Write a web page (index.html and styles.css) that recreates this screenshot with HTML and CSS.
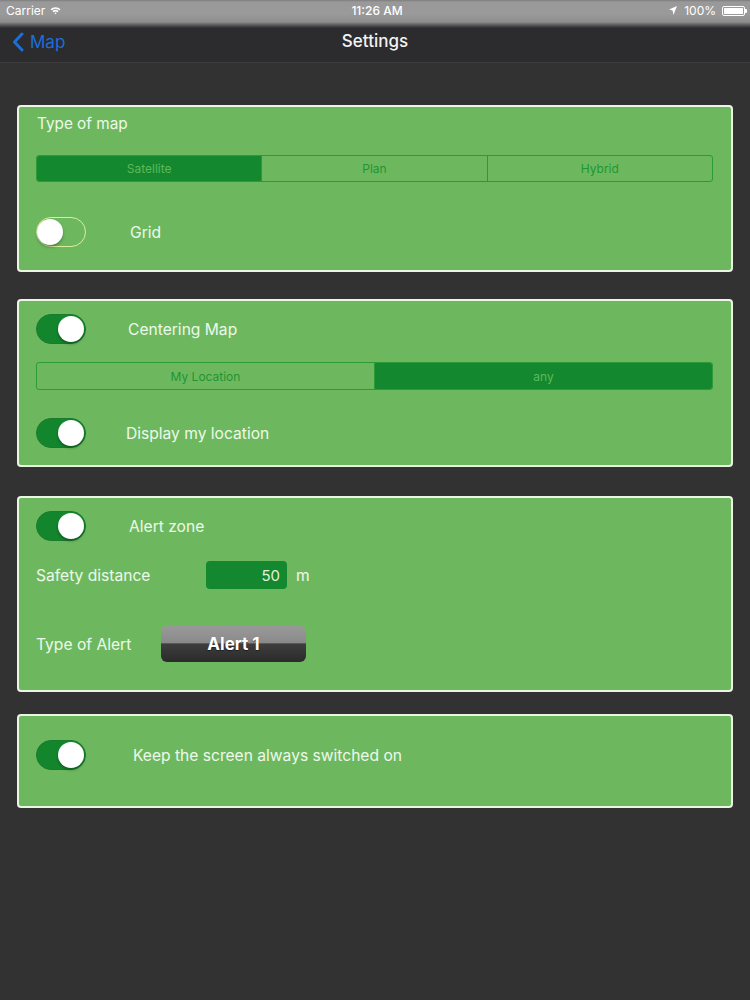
FILE: index.html
```html
<!DOCTYPE html>
<html lang="en">
<head>
<meta charset="utf-8">
<title>Settings</title>
<link rel="stylesheet" href="styles.css">
</head>
<body>
<div class="status">
  <div class="status-left">
    <span>Carrier</span>
    <svg class="wifi" width="11" height="9" viewBox="0 0 11 9"><path d="M0.5 3.2 A7.5 7.5 0 0 1 10.5 3.2 L9.4 4.3 A6 6 0 0 0 1.6 4.3 Z" fill="#fff"/><path d="M2.4 5.1 A4.8 4.8 0 0 1 8.6 5.1 L7.5 6.2 A3.3 3.3 0 0 0 3.5 6.2 Z" fill="#fff"/><path d="M4.3 7 A2 2 0 0 1 6.7 7 L5.5 8.3 Z" fill="#fff"/></svg>
  </div>
  <div class="status-time">11:26 AM</div>
  <div class="status-right">
    <svg class="arrow" width="8" height="9" viewBox="0 0 8 9"><path d="M8 0 L0 3.6 L3.6 4.4 L4.4 9 Z" fill="#fff"/></svg>
    <span>100%</span>
    <span class="battery"><span class="battery-fill"></span></span>
  </div>
</div>
<div class="nav">
  <div class="back">
    <svg width="12" height="20" viewBox="0 0 12 20"><path d="M10 2 L2.5 10 L10 18" fill="none" stroke="#1b6fd9" stroke-width="3" stroke-linecap="round" stroke-linejoin="round"/></svg>
    <span>Map</span>
  </div>
  <div class="title">Settings</div>
</div>
<main class="content">
  <section class="card card-1">
    <div class="label">Type of map</div>
    <div class="seg seg-1">
      <span class="seg-item selected">Satellite</span>
      <span class="seg-item">Plan</span>
      <span class="seg-item">Hybrid</span>
    </div>
    <div class="row row-grid">
      <span class="toggle off"><span class="knob"></span></span>
      <span class="row-text gap-44">Grid</span>
    </div>
  </section>

  <section class="card card-2">
    <div class="row">
      <span class="toggle on"><span class="knob"></span></span>
      <span class="row-text gap-42">Centering Map</span>
    </div>
    <div class="seg seg-2">
      <span class="seg-item">My Location</span>
      <span class="seg-item selected">any</span>
    </div>
    <div class="row row-display">
      <span class="toggle on"><span class="knob"></span></span>
      <span class="row-text gap-40">Display my location</span>
    </div>
  </section>

  <section class="card card-3">
    <div class="row">
      <span class="toggle on"><span class="knob"></span></span>
      <span class="row-text gap-43">Alert zone</span>
    </div>
    <div class="field-row">
      <span class="field-label label-safety">Safety distance</span>
      <span class="field">50</span>
      <span class="unit">m</span>
    </div>
    <div class="field-row alert-row">
      <span class="field-label label-alert">Type of Alert</span>
      <span class="alert-btn">Alert 1</span>
    </div>
  </section>

  <section class="card card-4">
    <div class="row">
      <span class="toggle on"><span class="knob"></span></span>
      <span class="row-text gap-47">Keep the screen always switched on</span>
    </div>
  </section>
</main>
</body>
</html>
```
FILE: styles.css
```css
* { box-sizing: border-box; }
html, body { margin: 0; padding: 0; }
body {
  width: 750px;
  height: 1000px;
  background: #323232;
  font-family: "Inter", "Roboto", "Liberation Sans", sans-serif;
  color: #eef8ea;
  overflow: hidden;
}

/* status bar */
.status {
  height: 28px;
  background: linear-gradient(#7d7d7d 0, #999999 2px, #9a9a9a 14px, #8d8d8d 22px, #4a494b 26px, #2c2b2d 28px);
  display: flex;
  align-items: flex-start;
  justify-content: space-between;
  padding: 3px 5px 0 6px;
  font-size: 12px;
  line-height: 15px;
  color: #ffffff;
  position: relative;
}
.status-left { display: flex; align-items: center; gap: 5px; }
.status-time {
  position: absolute;
  left: 0; right: 0; top: 3px;
  text-align: center;
  padding-left: 4px;
  font-weight: 500;
}
.status-right { display: flex; align-items: center; gap: 4px; }
.status-right .arrow { margin-right: 3px; }
.battery {
  width: 23px; height: 10px;
  border: 1px solid #fff;
  border-radius: 2px;
  padding: 1px;
  position: relative;
  margin-left: 2px;
}
.battery::after {
  content: "";
  position: absolute;
  right: -3px; top: 2px;
  width: 2px; height: 4px;
  background: #fff;
  border-radius: 0 1px 1px 0;
}
.battery-fill { display: block; width: 100%; height: 100%; background: #fff; }

/* nav bar */
.nav {
  height: 35px;
  background: #2c2b2d;
  border-bottom: 1px solid #3d3d3e;
  display: flex;
  align-items: center;
  position: relative;
  padding-left: 12px;
}
.back {
  display: flex;
  align-items: center;
  gap: 6px;
  color: #1b6fd9;
  font-size: 17px;
  margin-top: -7px;
}
.title {
  position: absolute;
  left: 0; right: 0; top: 2px;
  text-align: center;
  font-size: 17px;
  font-weight: 500;
  color: #f2f2f2;
  line-height: 22px;
}

/* content */
.content {
  padding: 42px 17px 0 17px;
}
.card {
  width: 716px;
  background: #6db85f;
  border: 2px solid #eaf5e4;
  border-radius: 4px;
  padding: 0 18px 0 17px;
}
.card-1 { padding-top: 7px; padding-bottom: 23px; }
.card-2 { margin-top: 27px; padding-top: 13px; padding-bottom: 17px; }
.card-3 { margin-top: 29px; padding-top: 13px; padding-bottom: 28px; }
.card-4 { margin-top: 22px; padding-top: 24px; padding-bottom: 36px; }

.label {
  font-size: 15.3px;
  line-height: 20px;
  height: 20px;
  margin-left: 1px;
}

/* segmented control */
.seg {
  display: flex;
  border: 1px solid #2c9a36;
  border-radius: 3px;
  overflow: hidden;
}
.seg-1 { margin-top: 21px; height: 27px; }
.seg-2 { margin-top: 18px; height: 28px; }
.seg-item {
  flex: 1;
  display: flex;
  align-items: center;
  justify-content: center;
  font-size: 12px;
  color: #1f9631;
  border-left: 1px solid #2c9a36;
}
.seg-item:first-child { border-left: none; }
.seg-item.selected {
  background: #13882e;
  color: #5db95a;
}

/* rows with toggles */
.row {
  display: flex;
  align-items: center;
  height: 30px;
}
.row-grid { margin-top: 35px; }
.row-display { margin-top: 28px; }
.row-text { font-size: 15.6px; }
.gap-40 { margin-left: 40px; }
.gap-42 { margin-left: 42px; }
.gap-43 { margin-left: 43px; }
.gap-44 { margin-left: 44px; }
.gap-47 { margin-left: 47px; }

.toggle {
  width: 50px;
  height: 30px;
  border-radius: 15px;
  position: relative;
  flex: none;
}
.toggle.on {
  background: #13862d;
  border: 1px solid #1a7a2e;
}
.toggle.off {
  border: 1.5px solid #d9f09a;
}
.knob {
  position: absolute;
  top: 1px;
  width: 26px;
  height: 26px;
  border-radius: 50%;
  background: #ffffff;
  box-shadow: 0 2px 3px rgba(0, 0, 0, 0.3);
}
.toggle.on .knob { right: 1px; }
.toggle.off .knob { left: 0; top: 0.5px; }

/* fields */
.field-row {
  display: flex;
  align-items: center;
  height: 28px;
  margin-top: 20px;
  font-size: 15.6px;
}
.label-safety { width: 170px; }
.label-alert { width: 125px; }
.field {
  width: 81px;
  height: 28px;
  background: #14882e;
  border-radius: 4px;
  display: flex;
  align-items: center;
  justify-content: flex-end;
  padding-right: 7px;
  font-size: 15px;
  color: #e0f3dc;
}
.unit { margin-left: 9px; }
.alert-row { margin-top: 37px; height: 36px; }
.alert-btn {
  width: 145px;
  height: 36px;
  border-radius: 6px;
  background: linear-gradient(#999999 0, #8a8a8a 46%, #3e3e3e 50%, #2a2a2a 100%);
  display: flex;
  align-items: center;
  justify-content: center;
  font-size: 17px;
  font-weight: 700;
  color: #ffffff;
  text-shadow: 0 1px 1px rgba(0,0,0,0.5);
}
```
